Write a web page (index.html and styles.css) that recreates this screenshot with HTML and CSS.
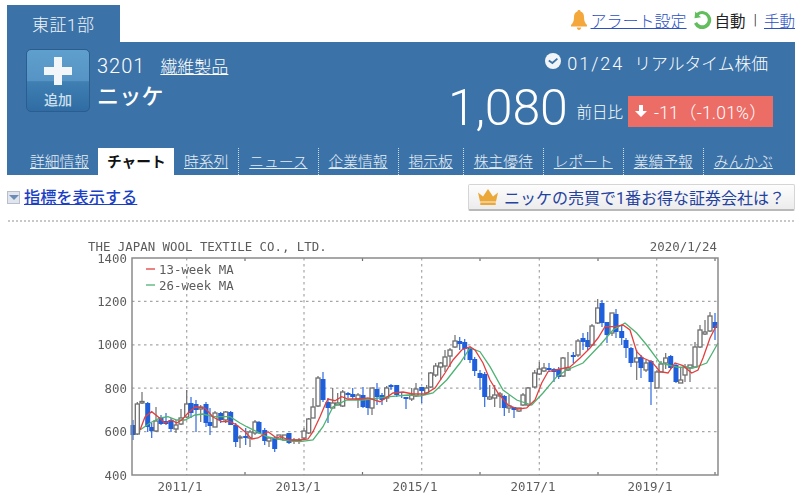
FILE: index.html
```html
<!DOCTYPE html>
<html lang="ja">
<head>
    <meta charset="UTF-8">
    <meta name="viewport" content="width=device-width, initial-scale=1.0">
    <title>ニッケ チャート</title>
    <link rel="stylesheet" href="styles.css">
</head>
<body>
    <div class="container">
        <div class="top-row">
            <div class="market-tab">東証1部</div>
            <div class="alert-links">
                <svg class="icon-bell" viewBox="0 0 16 20"><path d="M8 0c1 0 1.6.7 1.6 1.6C12 2.3 13 4.400 13 7c0 4 1 6 3 8v1.500H0V15c2-2 3-4 3-8 0-2.600 1-4.700 3.400-5.400C6.400.7 7 0 8 0zM5.800 17.500h4.400C10 19 9.200 20 8 20s-2-1-2.200-2.500z"/></svg>
                <a href="#" class="link-blue alert-link">アラート設定</a>
                <svg class="icon-refresh" viewBox="0 0 20 20"><path d="M3.300 2.500 2.500 9.300 9 8.300 6.800 6.200A5.600 5.600 0 1 1 5 13l-3 1.800A9 9 0 1 0 4.700 4z"/></svg>
                <span class="auto-label">自動</span>
                <span class="bar">|</span>
                <a href="#" class="link-blue">手動</a>
            </div>
        </div>

        <div class="panel">
            <div class="panel-main">
                <div class="stock">
                    <button class="add-button">
                        <svg class="icon-plus" viewBox="0 0 28 28"><path d="M10 0h8v10h10v8H18v10h-8V18H0v-8h10z"/></svg>
                        <span>追加</span>
                    </button>
                    <div class="stock-info">
                        <div class="stock-code">3201<a href="#">繊維製品</a></div>
                        <div class="stock-name">ニッケ</div>
                    </div>
                </div>
                <div class="quote">
                    <div class="quote-time">
                        <svg class="icon-clock" viewBox="0 0 16 16"><circle cx="8" cy="8" r="8"/><path d="M3.800 7.600 7.400 10 12.400 5.600"/></svg>
                        <span>01/24</span>
                        <span class="realtime">リアルタイム株価</span>
                    </div>
                    <div class="quote-price">
                        <span class="price">1,080</span>
                        <span class="price-label">前日比</span>
                        <div class="change">
                            <svg class="icon-down" viewBox="0 0 12 12"><path d="M4 0h4v6h4L6 12 0 6h4z"/></svg>
                            <span>-11（-1.01%）</span>
                        </div>
                    </div>
                </div>
            </div>
            <ul class="nav">
                <li><a href="#">詳細情報</a></li>
                <li class="active">チャート</li>
                <li class="sep"><a href="#">時系列</a></li>
                <li class="sep"><a href="#">ニュース</a></li>
                <li class="sep"><a href="#">企業情報</a></li>
                <li class="sep"><a href="#">掲示板</a></li>
                <li class="sep"><a href="#">株主優待</a></li>
                <li class="sep"><a href="#">レポート</a></li>
                <li class="sep"><a href="#">業績予報</a></li>
                <li><a href="#">みんかぶ</a></li>
            </ul>
        </div>

        <div class="tool-row">
            <div class="indicator">
                <span class="toggle-box"><span class="toggle-arrow"></span></span>
                <a href="#" class="indicator-link">指標を表示する</a>
            </div>
            <a href="#" class="broker-button">
                <svg class="icon-crown" viewBox="0 0 20 16"><path d="M0 3.500 5 7.500 10 0l5 7.500 5-4-2 9H2zM2.300 13.500h15.400V16H2.300z"/></svg>
                <span>ニッケの売買で1番お得な証券会社は？</span>
            </a>
        </div>
        <div class="dots"></div>
    </div>

    <svg id="chart" class="chart" viewBox="0 228 800 271">
        <text class="chart-text" x="88" y="251">THE JAPAN WOOL TEXTILE CO., LTD.</text>
        <text class="chart-text end" x="717" y="251">2020/1/24</text>

        <text class="chart-text end" x="127" y="263">1400</text>
        <text class="chart-text end" x="127" y="306">1200</text>
        <text class="chart-text end" x="127" y="349">1000</text>
        <text class="chart-text end" x="127" y="393">800</text>
        <text class="chart-text end" x="127" y="436">600</text>
        <text class="chart-text end" x="127" y="480">400</text>

        <text class="chart-text middle" x="180" y="491">2011/1</text>
        <text class="chart-text middle" x="298" y="491">2013/1</text>
        <text class="chart-text middle" x="415" y="491">2015/1</text>
        <text class="chart-text middle" x="533" y="491">2017/1</text>
        <text class="chart-text middle" x="650" y="491">2019/1</text>

        <g id="grid"></g>
        <g id="candles"></g>
        <g id="lines"></g>
        <rect class="frame" x="132" y="258" width="586" height="217"/>

        <line class="ma-red" x1="146" y1="269" x2="155" y2="269"/>
        <text class="chart-text" x="159" y="274">13-week MA</text>
        <line class="ma-green" x1="146" y1="285" x2="155" y2="285"/>
        <text class="chart-text" x="159" y="290">26-week MA</text>
    </svg>

    <script src="chart.js"></script>
</body>
</html>
```

FILE: styles.css
```css
* {
    box-sizing: border-box;
}
body {
    font-family: 'Roboto', 'Noto Sans CJK JP', sans-serif;
    background-color: #fff;
    margin: 0;
    padding: 0;
    overflow: hidden;
}
a {
    color: inherit;
}
.container {
    padding: 5px 5px 0 7px;
}
.top-row {
    display: flex;
    justify-content: space-between;
    height: 37px;
}
.market-tab {
    width: 113px;
    background-color: #3b72a8;
    color: #eef3f8;
    font-size: 17px;
    font-weight: 300;
    letter-spacing: 0.5px;
    padding: 6px 0 0 25px;
}
.alert-links {
    display: flex;
    align-items: center;
    height: 30px;
    font-size: 15.500px;
    color: #222;
}
.link-blue {
    color: #2c50c4;
    font-weight: 300;
}
.alert-link {
    font-size: 16px;
}
.icon-bell {
    width: 16px;
    height: 20px;
    fill: #f4a83c;
    margin-right: 4px;
}
.icon-refresh {
    width: 20px;
    height: 20px;
    fill: #62bd5c;
    margin: 0 3px 3px 5px;
}
.auto-label {
    font-weight: 400;
}
.bar {
    margin: 0 7px 0 8px;
    font-weight: 300;
}
.panel {
    background-color: #3b72a8;
    color: #fff;
    height: 133px;
}
.panel-main {
    display: flex;
    justify-content: space-between;
    height: 105px;
}
.stock {
    display: flex;
    padding: 7px 0 0 19px;
}
.add-button {
    width: 64px;
    height: 63px;
    padding: 4px 0 0;
    border: 1px solid #2d5c8e;
    border-radius: 5px;
    background: linear-gradient(#5f9fcd, #5594c4 50%, #3f7fb2 52%, #2f6ca3);
    color: #cfe0ee;
    font-family: 'Noto Sans CJK JP', sans-serif;
    font-size: 14px;
    font-weight: 500;
    display: flex;
    flex-direction: column;
    align-items: center;
}
.icon-plus {
    width: 28px;
    height: 28px;
    margin: 3px 0 4px;
    fill: #f2f6f9;
}
.stock-info {
    padding: 4px 0 0 7px;
}
.stock-code {
    font-size: 20px;
    font-weight: 300;
    line-height: 26px;
    letter-spacing: 1px;
}
.stock-code a {
    margin-left: 15px;
    font-size: 17px;
    letter-spacing: 0;
}
.stock-name {
    font-size: 22px;
    font-weight: 500;
    line-height: 34px;
    letter-spacing: 0.2px;
}
.quote {
    display: flex;
    flex-direction: column;
    align-items: flex-end;
    padding: 9px 22px 0 0;
}
.quote-time {
    display: flex;
    align-items: center;
    height: 24px;
    margin-right: 5px;
    font-size: 18px;
    font-weight: 300;
    letter-spacing: 2px;
}
.icon-clock {
    width: 16px;
    height: 16px;
    margin: 0 6px 5px 0;
    fill: #f2f5f8;
}
.icon-clock path {
    fill: none;
    stroke: #3b72a8;
    stroke-width: 1.800;
}
.realtime {
    margin-left: 10px;
    font-size: 16.800px;
    letter-spacing: 0;
}
.quote-price {
    display: flex;
    align-items: center;
    height: 48px;
    margin-top: 10px;
}
.price {
    font-size: 50px;
    font-weight: 300;
    letter-spacing: -0.2px;
    margin-right: 9px;
    margin-bottom: 3px;
}
.price-label {
    font-size: 15.500px;
    font-weight: 300;
    margin-right: 5px;
    margin-top: 4px;
}
.change {
    display: flex;
    align-items: center;
    width: 145px;
    height: 31px;
    margin-top: 4px;
    padding-left: 7px;
    background-color: #ec6c66;
    font-size: 17.500px;
    font-weight: 300;
    letter-spacing: 0.2px;
}
.icon-down {
    width: 12px;
    height: 12px;
    fill: #fff;
    margin-right: 7px;
}
.nav {
    list-style: none;
    display: flex;
    align-items: flex-end;
    height: 28px;
    margin: 0;
    padding: 0 0 0 13px;
    font-size: 14.750px;
    font-weight: 300;
}
.nav li {
    height: 27px;
    line-height: 20px;
    padding: 4px 10px 0;
    white-space: nowrap;
    color: #e6eef5;
}
.nav .sep {
    border-right: 1px dotted #cfdcea;
}
.nav .active {
    background-color: #fff;
    color: #111;
    font-weight: 700;
    width: 76px;
    margin-left: -1px;
    padding: 4px 0 0 9px;
}
.tool-row {
    display: flex;
    justify-content: space-between;
    align-items: center;
    height: 27px;
    margin-top: 9px;
}
.indicator {
    display: flex;
    align-items: center;
}
.toggle-box {
    display: flex;
    justify-content: center;
    align-items: center;
    width: 13px;
    height: 13px;
    margin-right: 4px;
    background-color: #e1e6ee;
    border: 1px solid #b7bfcc;
}
.toggle-arrow {
    width: 0;
    height: 0;
    border-left: 5px solid transparent;
    border-right: 5px solid transparent;
    border-top: 5px solid #6b8db5;
}
.indicator-link {
    color: #1c3fc4;
    font-size: 16.200px;
    font-weight: 500;
    margin-bottom: 3px;
}
.broker-button {
    display: flex;
    align-items: center;
    width: 327px;
    height: 27px;
    padding-left: 9px;
    border: 1px solid #d5d5d5;
    border-bottom: 2px solid #b9b9b9;
    border-radius: 2px;
    background: linear-gradient(#fdfdfd, #ececec);
    color: #24429f;
    font-size: 16px;
    font-weight: 400;
    text-decoration: none;
}
.icon-crown {
    width: 20px;
    height: 16px;
    fill: #eba836;
    margin-right: 6px;
}
.dots {
    height: 2px;
    margin-top: 9px;
    background-image: radial-gradient(#c8c8c8 40%, transparent 50%);
    background-size: 4px 2px;
}
.chart {
    display: block;
    width: 800px;
    height: 271px;
    margin-top: 6px;
    filter: blur(0.4px);
}
.chart-text {
    font-family: 'DejaVu Sans Mono', monospace;
    font-size: 12.400px;
    fill: #5c5c5c;
}
.end {
    text-anchor: end;
}
.middle {
    text-anchor: middle;
}
.frame {
    fill: none;
    stroke: #8a8a8a;
    stroke-width: 1.500;
}
.grid-line {
    stroke: #a6a6a6;
    stroke-width: 1.200;
    stroke-dasharray: 2.500 3.500;
}
.wick-white {
    stroke: #6e6e6e;
    stroke-width: 1.200;
}
.wick-blue {
    stroke: #2f6ade;
    stroke-width: 1.200;
}
.body-white {
    fill: #fff;
    stroke: #6e6e6e;
    stroke-width: 1.300;
}
.body-blue {
    fill: #1f5fdc;
}
.ma-red {
    fill: none;
    stroke: #e2403f;
    stroke-width: 1.300;
}
.ma-green {
    fill: none;
    stroke: #4fb274;
    stroke-width: 1.300;
}
```

FILE: chart.js
```js
// monthly candles in svg coordinates: x, wick top, wick bottom, body top, body bottom, kind
const candles = [
    [133,420,440,425,435,'b'],[137.3,402,435,404,434,'w'],[142,392,404,401.5,403,'w'],[147.7,402,432,403,427,'b'],
    [151.7,423,438,427,431,'b'],[156,407,432,421,431,'w'],[161,415,425,417,424,'b'],[166,413,425,421,424,'b'],
    [171,418,432,420,429,'b'],[176,420,433,425,429,'w'],[181,409,425,418,424,'w'],[186.7,390,418,404,417,'w'],
    [191,397,418,403,413,'b'],[196,400,432,404,410,'b'],[200.7,405,422,407,409,'w'],[206,402,427,404,423,'b'],
    [210,408,435,422,426,'b'],[215,411,427,413,427,'w'],[220.7,412,423,413,420,'b'],[225.7,411,423,412,420,'w'],
    [230.7,411,425,412,425,'b'],[235.7,423,447,425,442,'b'],[240,435,448,437,438,'w'],[245.7,428,445,436,438,'b'],
    [250,430,447,432,438,'w'],[255,420,435,422,433,'w'],[259,421,434,422,433,'b'],[264.7,428,445,430,441,'b'],
    [269,437,447,438,441,'w'],[274.7,437,452,438,449,'b'],[279,435,440,435,439,'w'],[284.7,435,441,435,440,'w'],
    [289,433,444,433,443,'b'],[294,438,444,440,441,'w'],[299,438,444,440,441,'w'],[304,428,440,431,438,'w'],
    [308.7,418,434,419,433,'w'],[313,398,418,407,418,'w'],[318,376,407,378,406,'w'],[323,372,402,379,400,'b'],
    [328,398,423,402,408,'b'],[332.7,388,408,403,408,'w'],[337.7,393,405,403,405,'w'],[342.7,390,407,392,406,'w'],
    [348,392,398,393,395,'b'],[352.7,388,399,394,397,'b'],[358,393,408,395,399,'w'],[363,387,408,395,407,'b'],
    [368,398,415,400,408,'b'],[372,388,415,388,408,'w'],[377,383,405,389,397,'b'],[382,393,405,395,400,'b'],
    [386.7,386,402,388,398,'w'],[391,384,390,385,387,'b'],[396.7,385,397,385,395,'b'],[401.7,393,398,395,396,'b'],
    [406,397,409,397,399,'b'],[411.7,388,401,395,399,'w'],[416,383,397,389,396,'w'],[421.7,387,403,387,391,'b'],
    [426.7,385,393,388,393,'w'],[430.7,372,388,373,387,'w'],[435.7,363,377,366,375,'w'],[440.7,362,380,363,367,'w'],
    [445,350,372,357,366,'w'],[450,348,367,350,356,'w'],[455,335,348,341,347,'w'],[459.7,337,350,341,344,'b'],
    [464.7,339,360,342,349,'b'],[470,347,363,348,360,'b'],[474.7,357,376,359,371,'b'],[480,370,390,373,378,'b'],
    [484.7,372,407,374,397,'b'],[489.7,385,400,397,399,'w'],[494.7,385,407,395,398,'w'],[500,392,408,394,396,'w'],
    [504.3,395,416,396,408,'b'],[509,395,413,406,408,'w'],[514,407,418,407,410,'b'],[519,408,412,408,411,'w'],
    [523,393,406,395,405,'w'],[528,387,406,388,405,'w'],[534.7,370,388,373,387,'w'],[539.3,362,375,369,374,'w'],
    [544,363,372,368,371,'w'],[549,363,371,368,370,'b'],[554,368,382,369,372,'b'],[558.7,367,379,369,377,'b'],
    [563,357,377,358,376,'w'],[568,352,371,368,370,'w'],[573.3,352,363,355,357,'b'],[578,339,357,341,355,'w'],
    [583,333,350,338,342,'b'],[587.7,332,350,340,347,'b'],[592,324,346,326,345,'w'],[597.7,299,324,308,323,'w'],
    [602,300,327,303,323,'b'],[607,322,343,322,335,'b'],[612,313,336,313,333,'w'],[616,309,338,314,332,'b'],
    [621.7,325,345,331,338,'b'],[626,338,358,340,348,'b'],[631,347,367,348,363,'b'],[636.7,350,380,358,362,'w'],
    [641,355,378,357,368,'b'],[646,360,372,363,370,'w'],[651,360,405,361,382,'b'],[657,370,388,372,388,'w'],
    [661,361,372,364,372,'w'],[665.7,353,369,358,363,'w'],[670.7,355,369,356,368,'b'],[676,363,383,365,382,'b'],
    [680.7,367,383,380,383,'w'],[685,364,382,367,375,'w'],[690,365,382,365,368,'w'],[695,342,368,347,367,'w'],
    [700,325,348,330,347,'w'],[705,320,335,332,334,'w'],[710,312,332,316,331,'w'],[715,313,340,322,328,'b']
];

const red = '140,430 145,417 151.7,411.7 158,416.7 165,423 171.7,420 176.7,423 181.7,420 188,413 195,407 205,408 213,417 221.7,421.7 230,421.7 236.7,425 245,431.7 251.7,439 258,438 268,431.7 276.7,438 280,436.7 290,440 300,440 308,439 313,431.7 320,416.7 325,405 328,399 335,400.7 341.7,396.7 348,399 360,399 368,398 380,401.7 393,393 403,392 413,394 425,394 435,388 445,373 453,360 461.7,350 470,346.7 475,350 483,363 490,380 498,393 508,405 518,409 526.7,408 535,400 541.7,383 548,371.7 560,369 570,367 580,358 590,348 598,338 605,326.7 615,326.7 623,325 630,330 636.7,351.7 643,358 651.7,361.7 660,371.7 668,373 675,363 683,365.7 691.7,373 698,370 703,358 710,338 716.7,325';
const green = '140,430 150,423 160,418 168,416.7 176.7,420 185,420 195,415 203,414 213,416.7 230,416.7 240,423 246.7,426.7 266.7,436.7 283,440 300,441.7 313,440 323,426.7 333,406.7 346.7,400 363,400 390,396.7 408,395 420,396 433,393 446.7,380 460,363 470,348 480,351.7 490,366.7 503,390 516.7,400 531.7,405 543,393 556.7,376.7 566.7,370 583,363 600,345 613,330 625,323 636.7,333 646.7,345 660,363 676.7,367 693,368 706.7,363 718,343';

const SVG_NS = 'http://www.w3.org/2000/svg';

function addShape(parent, name, attrs) {
    const el = document.createElementNS(SVG_NS, name);
    Object.keys(attrs).forEach(key => el.setAttribute(key, attrs[key]));
    parent.appendChild(el);
}

function drawGrid() {
    const grid = document.getElementById('grid');
    [301.4, 344.8, 388.2, 431.6].forEach(y => {
        addShape(grid, 'line', { class: 'grid-line', x1: 132, y1: y, x2: 718, y2: y });
    });
    [186.7, 304, 421.7, 539.3, 656.7].forEach(x => {
        addShape(grid, 'line', { class: 'grid-line', x1: x, y1: 258, x2: x, y2: 475 });
    });
    // short ticks half way between the year lines
    [245, 362.5, 480, 598, 715].forEach(x => {
        addShape(grid, 'line', { class: 'wick-white', x1: x, y1: 258, x2: x, y2: 261 });
        addShape(grid, 'line', { class: 'wick-white', x1: x, y1: 472, x2: x, y2: 475 });
    });
}

function drawCandles() {
    const group = document.getElementById('candles');
    candles.forEach(([x, top, bottom, bodyTop, bodyBottom, kind]) => {
        const white = kind === 'w';
        addShape(group, 'line', { class: white ? 'wick-white' : 'wick-blue', x1: x, y1: top, x2: x, y2: bottom });
        addShape(group, 'rect', {
            class: white ? 'body-white' : 'body-blue',
            x: white ? x - 2 : x - 2.5,
            y: bodyTop,
            width: white ? 4 : 5,
            height: bodyBottom - bodyTop
        });
    });
}

function drawLines() {
    const group = document.getElementById('lines');
    addShape(group, 'polyline', { class: 'ma-green', points: green });
    addShape(group, 'polyline', { class: 'ma-red', points: red });
}

drawGrid();
drawCandles();
drawLines();
```
